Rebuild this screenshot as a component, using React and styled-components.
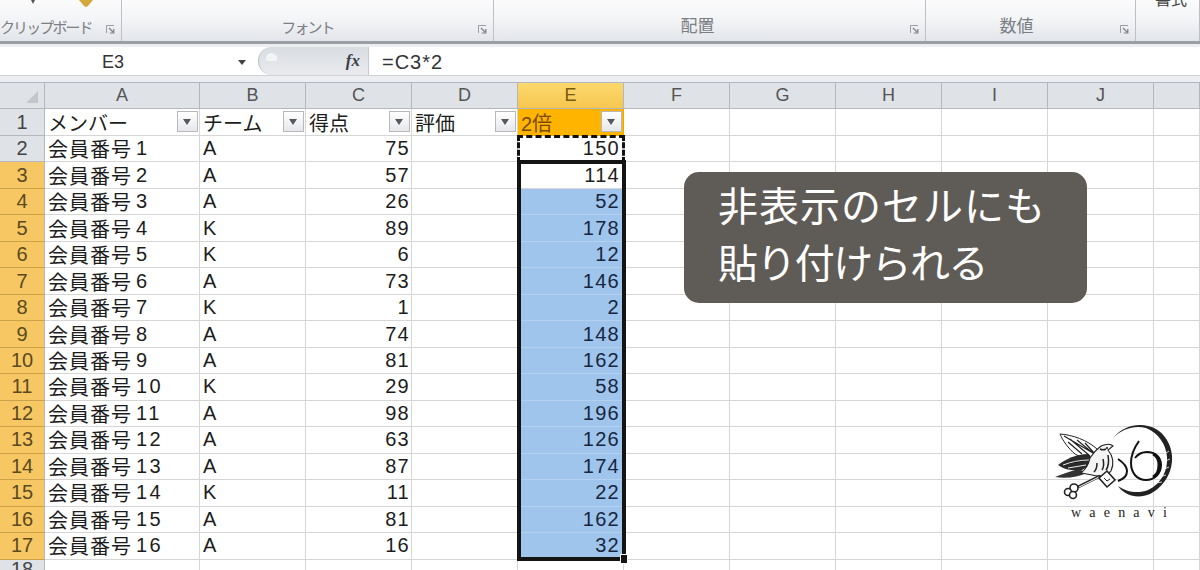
import React from "react";
import styled, { createGlobalStyle, css } from "styled-components";

const UI = `"Liberation Sans", "Noto Sans CJK JP", sans-serif`;

const Global = createGlobalStyle`
  html, body { margin: 0; padding: 0; background: #fff; overflow: hidden; }
  body { font-family: ${UI}; }
`;

const Page = styled.div`
  width: 1200px;
  height: 570px;
  overflow: hidden;
  display: flex;
  flex-direction: column;
  background: #eceef1;
`;

/* ribbon */
const Ribbon = styled.div`
  height: 41px;
  flex: none;
  display: grid;
  grid-template-columns: 122px 372px 432px 210px 64px;
  background: linear-gradient(#fbfbfc, #f4f5f7 45%, #e2e5ea);
  border-bottom: 3px solid #9b9fa5;
`;
const Group = styled.div`
  position: relative;
  display: flex;
  align-items: flex-end;
  justify-content: center;
  padding: 0 ${(p) => p.$pad || 0}px 4px 0;
  border-right: 1px solid #bcc0c6;
  font-size: 15px;
  color: #7b7e84;
  ${(p) => p.$left && "justify-content: flex-start;"}
`;
const GroupLabel = styled.span`
  white-space: nowrap;
  ${(p) => p.$narrow && "letter-spacing: -1.9px;"}
  ${(p) => p.$big && "font-size: 17px; line-height: 20px;"}
`;
const Launcher = styled.svg`
  position: absolute;
  right: 6px;
  bottom: 7px;
  width: 9px;
  height: 9px;
`;
const ClippedIcon = styled.svg`
  position: absolute;
  left: 0;
  top: 0;
  width: 110px;
  height: 12px;
`;
const ClippedText = styled.span`
  position: absolute;
  left: 19px;
  top: -14px;
  font-size: 16px;
  color: #444;
  white-space: nowrap;
`;

/* formula bar */
const FormulaBar = styled.div`
  flex: none;
  height: 28px;
  margin-top: 3px;
  display: flex;
  background: #fff;
  border-bottom: 1px solid #cfd2d6;
`;
const NameBox = styled.div`
  width: 258px;
  flex: none;
  display: flex;
  align-items: center;
  font-size: 18px;
  color: #333;
  padding: 3px 0 0 102px;
  box-sizing: border-box;
  position: relative;
`;
const NameArrow = styled.i`
  position: absolute;
  left: 238px;
  top: 13px;
  border: 4.5px solid transparent;
  border-top: 5px solid #444;
  border-bottom: 0;
`;
const FxBox = styled.div`
  position: relative;
  width: 111px;
  flex: none;
  box-sizing: border-box;
  display: flex;
  align-items: center;
  justify-content: flex-end;
  padding-right: 8px;
  background: linear-gradient(#d9dce1, #e9ebee);
  border-left: 1px solid #b9bdc3;
  border-right: 1px solid #c6c9ce;
  border-radius: 14px 0 0 14px;
  font: italic bold 17px "Liberation Serif", serif;
  color: #3c4048;
  &::before {
    content: "";
    position: absolute;
    left: 7px;
    top: 6px;
    width: 11px;
    height: 8px;
    border-radius: 6px 6px 2px 2px;
    background: #f3f4f6;
  }
`;
const Formula = styled.div`
  padding: 3px 0 0 13px;
  display: flex;
  align-items: center;
  font-size: 20px;
  letter-spacing: 1px;
  color: #333;
`;

/* sheet */
const tracks = css`
  display: grid;
  grid-template-columns: 45px 155px repeat(9, 106px) 46px;
  grid-template-rows: 26px 27px repeat(16, 26.47px) 20px;
`;
const SheetArea = styled.div`
  position: relative;
  flex: none;
  margin-top: 6px;
  border-top: 1px solid #b4b8be;
  background: #fff;
`;
const Sheet = styled.div`
  ${tracks}
`;
const Overlay = styled.div`
  ${tracks}
  position: absolute;
  inset: 0;
  pointer-events: none;
`;
const Corner = styled.div`
  position: relative;
  background: #dfe3e8;
  border-right: 1px solid #b4b8be;
  border-bottom: 1px solid #b4b8be;
  &::after {
    content: "";
    position: absolute;
    right: 6px;
    bottom: 5px;
    border-left: 12px solid transparent;
    border-bottom: 12px solid #c3c7cc;
  }
`;
const ColHead = styled.div`
  display: flex;
  align-items: center;
  justify-content: center;
  font-size: 18px;
  color: #555;
  box-sizing: border-box;
  border-right: 1px solid #b4b8be;
  border-bottom: 1px solid #b4b8be;
  background: ${(p) => (p.$on ? "linear-gradient(#fbd96e, #f7c64f)" : "#dfe3e8")};
  ${(p) => p.$on && "color: #7a5a10;"}
`;
const RowHead = styled.div`
  display: flex;
  align-items: center;
  justify-content: center;
  font-size: 20px;
  color: ${(p) => (p.$on ? "#5a4a20" : "#444")};
  box-sizing: border-box;
  border-right: 1px solid #b4b8be;
  border-bottom: 1px solid ${(p) => (p.$on ? "#c9a24a" : "#b4b8be")};
  background: ${(p) => (p.$on ? "#f7c763" : "#dfe3e8")};
`;
const Cell = styled.div`
  position: relative;
  display: flex;
  align-items: center;
  box-sizing: border-box;
  padding: 0 3px;
  font-size: 20px;
  white-space: nowrap;
  overflow: hidden;
  color: #1c1c1c;
  border-right: 1px solid #d6d6d6;
  border-bottom: 1px solid #d6d6d6;
  justify-content: ${(p) => (p.$num ? "flex-end" : "flex-start")};
  ${(p) => p.$num && `letter-spacing: 1.3px; padding-right: ${p.$inset || 1}px;`}
  ${(p) => p.$sel && "background: #9fc5ec; color: #17263f; border-right-color: #9fc5ec; border-bottom-color: #b4d2f0;"}
  ${(p) => p.$head && "background: #ffb400; color: #7a4a00; border-color: #f0a800;"}
`;
const HeadText = styled.span`
  letter-spacing: 0;
`;
const MemberName = styled.span`
  letter-spacing: 1px;
`;
const MemberNo = styled.span`
  margin-left: 4px;
  letter-spacing: 2.5px;
`;
const FilterBtn = styled.span`
  position: absolute;
  right: 1px;
  top: 2px;
  width: 21px;
  height: 21px;
  box-sizing: border-box;
  background: linear-gradient(#fff, #e6e7ea);
  border: 1px solid #b6b8bc;
  &::after {
    content: "";
    position: absolute;
    left: 5px;
    top: 7px;
    border: 4.5px solid transparent;
    border-top: 6px solid #55585e;
    border-bottom: 0;
  }
`;

/* selection marks, on the same tracks as the sheet */
const Ants = styled.div`
  grid-column: 6;
  grid-row: 3;
  border: 3px dashed #111;
  margin: -1px -1px -1px -1px;
`;
const Picked = styled.div`
  grid-column: 6;
  grid-row: 4 / 19;
  position: relative;
  border: 4px solid #141414;
  margin: -2px -2px -1px -1px;
  &::after {
    content: "";
    position: absolute;
    right: -6px;
    bottom: -7px;
    width: 6px;
    height: 8px;
    background: #141414;
    border: 1px solid #fff;
  }
`;

const Callout = styled.div`
  position: absolute;
  left: 684px;
  top: 89px;
  width: 403px;
  height: 131px;
  box-sizing: border-box;
  padding: 4px 0 0 34px;
  background: #5f5b57;
  border-radius: 15px;
  color: #fff;
  font: 40px/57px "Noto Sans CJK JP", sans-serif;
`;
const CalloutLine = styled.div`
  white-space: nowrap;
  letter-spacing: ${(p) => p.$track || 0}px;
`;

const Logo = styled.div`
  position: absolute;
  left: 1030px;
  top: 338px;
  width: 150px;
  height: 110px;
`;
const LogoName = styled.span`
  position: absolute;
  left: 41px;
  top: 84px;
  font: 14px "Liberation Serif", serif;
  letter-spacing: 8.2px;
  color: #222;
  white-space: nowrap;
`;

const members = [
  ["A", 75, 150], ["A", 57, 114], ["A", 26, 52], ["K", 89, 178],
  ["K", 6, 12], ["A", 73, 146], ["K", 1, 2], ["A", 74, 148],
  ["A", 81, 162], ["K", 29, 58], ["A", 98, 196], ["A", 63, 126],
  ["A", 87, 174], ["K", 11, 22], ["A", 81, 162], ["A", 16, 32],
];
const heads = ["メンバー", "チーム", "得点", "評価", "2倍"];
const cols = ["A", "B", "C", "D", "E", "F", "G", "H", "I", "J", ""];

const LauncherIcon = () => (
  <Launcher viewBox="0 0 9 9">
    <path d="M.5 8V.5H8" fill="none" stroke="#9a9da3" />
    <path d="M3 3l4 4M7.8 4v4h-4" fill="none" stroke="#7d8087" strokeWidth="1.2" />
  </Launcher>
);

const LogoMark = () => (
  <svg width="150" height="84" viewBox="0 0 150 84">
    {/* moon */}
    <path d="M83 17C92 6 106 2 118 5c14 3 23 16 24 30 1 16-8 31-22 38-12 5-25 2-32-8 8 6 20 8 30 4 13-6 20-19 19-33-1-12-8-24-21-29C104 4 92 8 83 17z" fill="#222" />
    <path d="M139 30l-6 4M140 38l-7 3M139 46l-7 3M136 54l-7 2M132 61l-6 1" stroke="#fff" strokeWidth=".8" />
    {/* mark */}
    <path d="M88 38c6 4 9 8 9 12s-3 8-9 10" stroke="#111" strokeWidth="2" fill="none" />
    <path d="M109 20c-5 7-8 14-8 22 0 10 6 17 15 17 9 0 15-7 15-15s-6-13-14-13c-5 0-9 2-12 6" stroke="#111" strokeWidth="2" fill="none" />
    <path d="M123 33c4 2 6 6 6 11s-2 10-6 12" stroke="#111" strokeWidth="3" fill="none" />
    {/* upper wing */}
    <path d="M30 13c13 1 27 6 37 15l3 8-14 3-11-6C38 27 33 20 30 13z" fill="#fff" stroke="#222" strokeWidth="1" />
    <path d="M34 15l29 17M40 18l20 17M47 19l17 14M55 22l10 11M38 21l14 12" stroke="#222" strokeWidth="1.2" />
    {/* lower wing and tail */}
    <path d="M28 44c8-6 18-11 30-11l8 8-14 8c-8 1-17 0-24-5z" fill="#2a2a2a" />
    <path d="M33 44c8-3 17-5 26-5M38 47c6-1 12-2 18-3" stroke="#eee" strokeWidth="1" />
    <path d="M25 56c8-3 15-6 24-8l8 4c-9 4-21 6-32 4z" fill="#333" />
    {/* body and head */}
    <path d="M60 37c3-5 7-9 11-12l3-1c3-1 7-1 9 1l-5 4c5 6 6 14 3 21-4 5-12 6-19 4l-11-2c5-4 8-10 9-15z" fill="#f4f4f4" stroke="#222" strokeWidth="1.1" />
    <path d="M78 34c1 6 1 11-2 15M73 38c1 4 1 8-1 11M67 42c0 4-1 7-3 9M70 28c2 1 4 1 6 0" stroke="#222" strokeWidth="1.5" fill="none" />
    <circle cx="77" cy="27" r="1" fill="#111" />
    {/* key */}
    <path d="M48 66l22-11" stroke="#222" strokeWidth="3" />
    <path d="M49 66l20-10" stroke="#fff" strokeWidth="1" />
    <path d="M69 57l8-7 8 9-8 7z" fill="#fff" stroke="#222" strokeWidth="1.6" />
    <path d="M74 57l3 3 3-2" fill="none" stroke="#222" />
    <circle cx="44" cy="67" r="4" fill="#fff" stroke="#222" strokeWidth="1.6" />
    <circle cx="38" cy="71" r="3.5" fill="#fff" stroke="#222" strokeWidth="1.6" />
    <circle cx="43" cy="74" r="3.5" fill="#fff" stroke="#222" strokeWidth="1.6" />
  </svg>
);

export default function App() {
  return (
    <Page>
      <Global />
      <Ribbon>
        <Group $left>
          <ClippedIcon viewBox="0 0 110 12">
            <path d="M31 0h4l-2 4z" fill="#555" />
            <path d="M79 0h14l-5 6-2 1-2-1z" fill="#d4a93c" />
          </ClippedIcon>
          <GroupLabel $narrow>クリップボード</GroupLabel>
          <LauncherIcon />
        </Group>
        <Group>
          <GroupLabel $narrow>フォント</GroupLabel>
          <LauncherIcon />
        </Group>
        <Group $pad={24}>
          <GroupLabel $big>配置</GroupLabel>
          <LauncherIcon />
        </Group>
        <Group $pad={28}>
          <GroupLabel $big>数値</GroupLabel>
          <LauncherIcon />
        </Group>
        <Group>
          <ClippedText>書式</ClippedText>
        </Group>
      </Ribbon>
      <FormulaBar>
        <NameBox>
          E3
          <NameArrow />
        </NameBox>
        <FxBox>fx</FxBox>
        <Formula>=C3*2</Formula>
      </FormulaBar>
      <SheetArea>
        <Sheet>
          <Corner />
          {cols.map((c, i) => (
            <ColHead key={i} $on={c === "E"}>{c}</ColHead>
          ))}

          <RowHead>1</RowHead>
          {heads.map((h, i) => (
            <Cell key={h} $head={i === 4}>
              <HeadText>{h}</HeadText>
              <FilterBtn />
            </Cell>
          ))}
          {cols.slice(5).map((c, i) => (
            <Cell key={i} />
          ))}

          {members.map((m, r) => (
            <React.Fragment key={r}>
              <RowHead $on={r > 0}>{r + 2}</RowHead>
              <Cell>
                <MemberName>会員番号</MemberName>
                <MemberNo>{r + 1}</MemberNo>
              </Cell>
              <Cell>{m[0]}</Cell>
              <Cell $num>{m[1]}</Cell>
              <Cell />
              <Cell $num $inset={3} $sel={r > 1}>{m[2]}</Cell>
              {cols.slice(5).map((c, i) => (
                <Cell key={i} />
              ))}
            </React.Fragment>
          ))}

          <RowHead>18</RowHead>
          {cols.map((c, i) => (
            <Cell key={i} />
          ))}
        </Sheet>
        <Overlay>
          <Ants />
          <Picked />
          <Callout>
            <CalloutLine $track={1}>非表示のセルにも</CalloutLine>
            <CalloutLine $track={-1.6}>貼り付けられる</CalloutLine>
          </Callout>
          <Logo>
            <LogoMark />
            <LogoName>waenavi</LogoName>
          </Logo>
        </Overlay>
      </SheetArea>
    </Page>
  );
}
